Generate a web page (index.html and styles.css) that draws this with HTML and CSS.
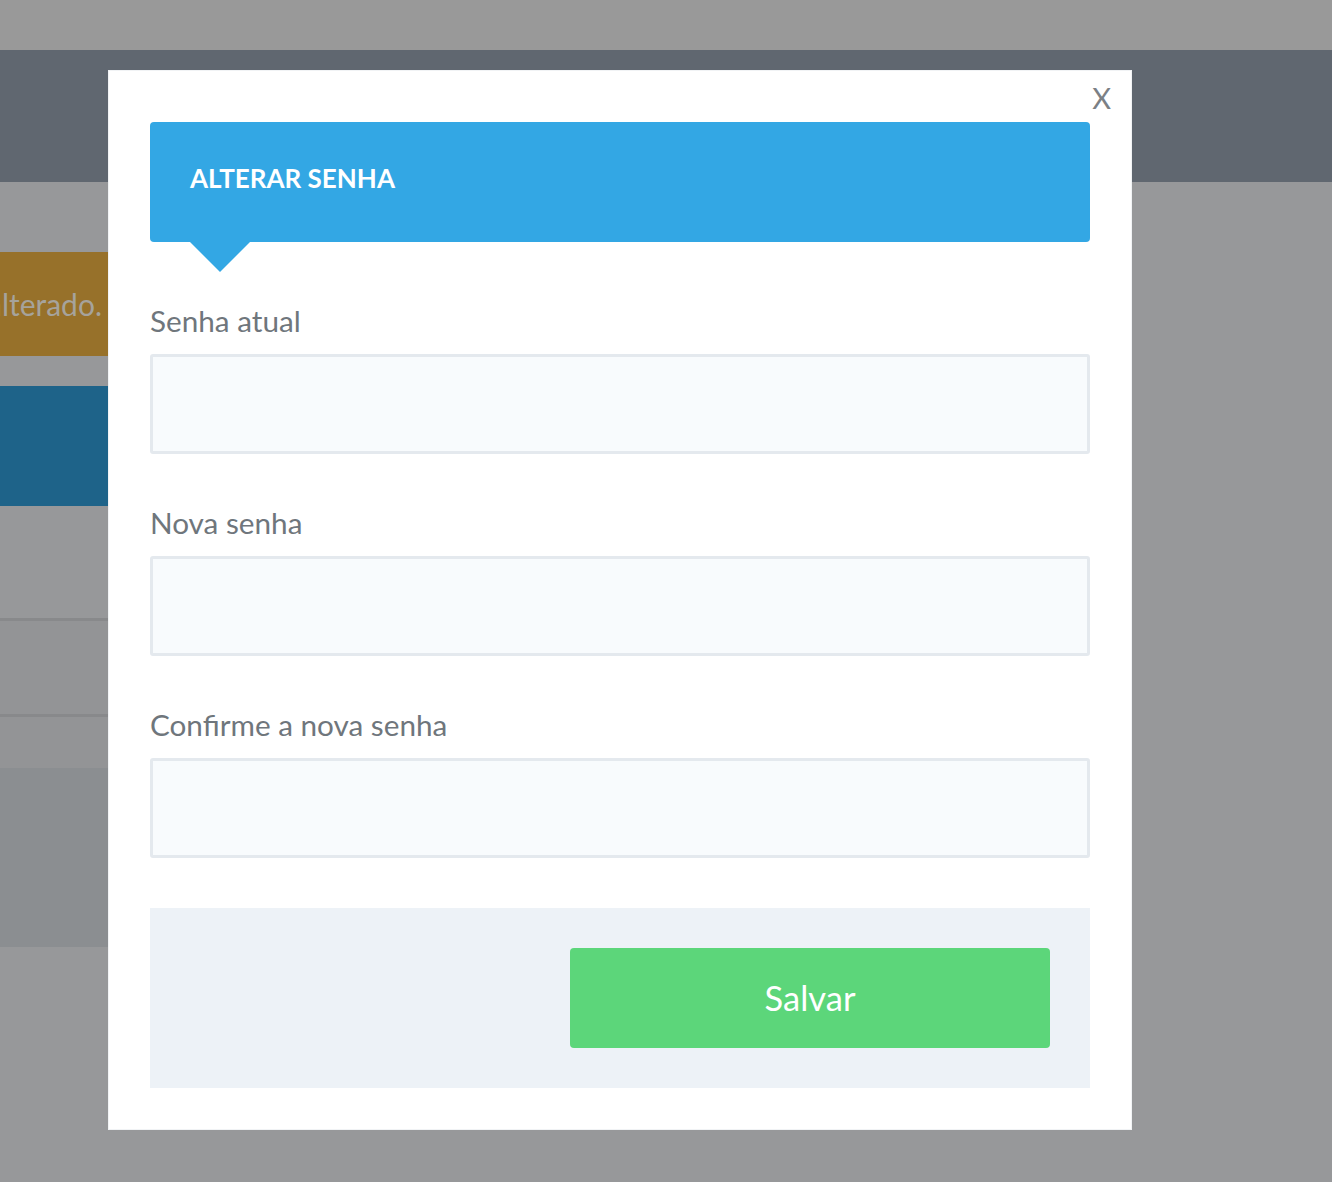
FILE: index.html
```html
<!DOCTYPE html>
<html lang="pt">
<head>
<meta charset="utf-8">
<title>Alterar senha</title>
<link rel="stylesheet" href="styles.css">
</head>
<body>
<div class="page">
  <div class="topbar"></div>
  <div class="header"></div>
  <div class="content">
    <div class="alert"><span>Sua senha foi alterado.</span></div>
    <div class="panel"></div>
    <div class="rows">
      <div class="row"></div>
      <div class="row short"></div>
    </div>
    <div class="block"></div>
  </div>
</div>

<div class="modal">
  <button class="close" type="button">X</button>
  <div class="modal-title"><h2>ALTERAR SENHA</h2></div>
  <form class="form">
    <div class="field">
      <label class="label">Senha atual</label>
      <input class="input" type="password">
    </div>
    <div class="field">
      <label class="label">Nova senha</label>
      <input class="input" type="password">
    </div>
    <div class="field">
      <label class="label">Confirme a nova senha</label>
      <input class="input" type="password">
    </div>
    <div class="footer">
      <button class="save" type="button">Salvar</button>
    </div>
  </form>
</div>
</body>
</html>
```
FILE: styles.css
```css
html, body {
  margin: 0;
  padding: 0;
}
body {
  background: #97989a;
  font-family: Lato, "Open Sans", sans-serif;
  width: 1332px;
  height: 1182px;
  overflow: hidden;
  position: relative;
}
.page {
  display: flex;
  flex-direction: column;
}
.topbar {
  height: 50px;
  background: #999999;
}
.header {
  height: 132px;
  background: #606770;
}
.content {
  width: 700px;
  padding-top: 70px;
  display: flex;
  flex-direction: column;
}
.alert {
  height: 104px;
  width: 108px;
  background: #97712a;
  display: flex;
  justify-content: flex-end;
  align-items: center;
  overflow: hidden;
  white-space: nowrap;
  padding-right: 6px;
  box-sizing: border-box;
}
.alert span {
  color: #a6a39c;
  font-size: 30px;
  flex-shrink: 0;
}
.panel {
  margin-top: 30px;
  height: 120px;
  background: #1e6389;
}
.rows {
  margin-top: 112px;
  display: flex;
  flex-direction: column;
}
.row {
  height: 93px;
  border-top: 3px solid #88898b;
  background: #939496;
}
.row.short {
  height: 51px;
}
.block {
  height: 179px;
  background: #8b8e91;
}

.modal {
  position: absolute;
  left: 108px;
  top: 70px;
  width: 1024px;
  height: 1060px;
  box-sizing: border-box;
  background: #ffffff;
  border: 1px solid #f1f3f5;
  padding: 51px 41px 41px 41px;
}
.close {
  position: absolute;
  right: 20px;
  top: 9px;
  background: none;
  border: 0;
  padding: 0;
  font-family: Lato, sans-serif;
  font-size: 29px;
  line-height: 36px;
  color: #7b8085;
  cursor: pointer;
}
.modal-title {
  position: relative;
  height: 120px;
  background: #33a7e4;
  border-radius: 4px;
  padding-left: 40px;
  display: flex;
  align-items: center;
}
.modal-title::after {
  content: "";
  position: absolute;
  left: 40px;
  bottom: -30px;
  border-left: 30px solid transparent;
  border-right: 30px solid transparent;
  border-top: 30px solid #33a7e4;
}
.modal-title h2 {
  margin: 0 0 8px 0;
  color: #ffffff;
  font-size: 26px;
  font-weight: 700;
  line-height: 30px;
}
.form {
  margin: 0;
}
.field {
  display: flex;
  flex-direction: column;
  margin-top: 49px;
}
.field:first-child {
  margin-top: 59px;
}
.label {
  font-size: 29.7px;
  line-height: 40px;
  color: #6f767c;
  margin-bottom: 13px;
}
.input {
  height: 100px;
  box-sizing: border-box;
  border: 3px solid #e4e9ee;
  border-radius: 3px;
  background: #f8fbfd;
  margin: 0;
  outline: none;
}
.footer {
  margin-top: 50px;
  height: 180px;
  box-sizing: border-box;
  padding: 40px;
  background: #edf2f7;
  display: flex;
  justify-content: flex-end;
}
.save {
  width: 480px;
  height: 100px;
  border: 0;
  border-radius: 4px;
  background: #5cd67a;
  color: #ffffff;
  font-family: Lato, sans-serif;
  font-size: 34.5px;
  padding: 0 0 2px 0;
  cursor: pointer;
}
```
